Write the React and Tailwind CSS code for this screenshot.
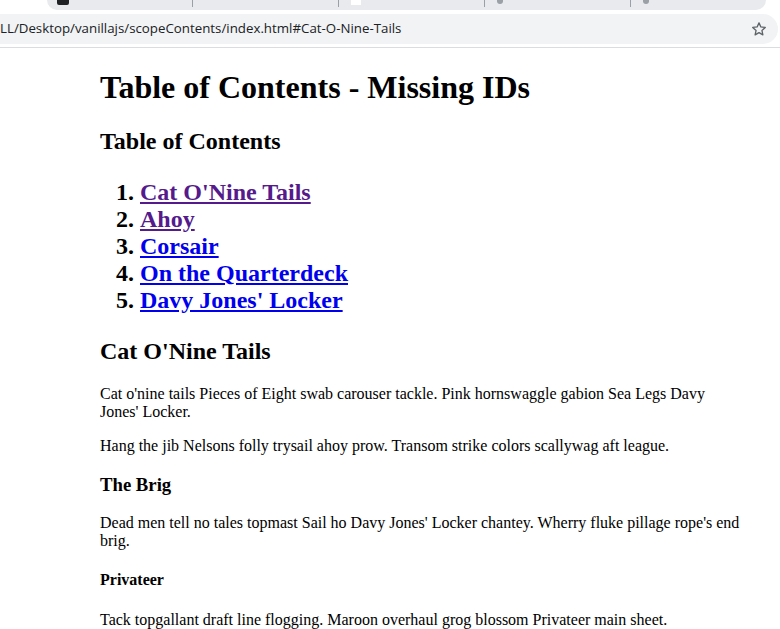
import React from "react";

function Star() {
  return (
    <svg width="16" height="16" viewBox="0 0 24 24" fill="none" stroke="#5f6368" strokeWidth="2" strokeLinejoin="round">
      <path d="M12 2.8l2.8 6.1 6.6.7-5 4.5 1.4 6.6L12 17.4l-5.8 3.3 1.4-6.6-5-4.5 6.6-.7z" />
    </svg>
  );
}

export default function App() {
  const serif = { fontFamily: '"Liberation Serif", "Times New Roman", serif' };
  return (
    <div className="w-[780px] h-[629px] overflow-hidden bg-white">
      {/* browser chrome */}
      <div className="h-[48px] bg-white border-b border-[#dadce0] flex flex-col">
        <div className="h-[10px] flex">
          <div className="w-[47px] bg-white" />
          <div className="flex-1 mr-[14px] bg-[#e8eaed] rounded-b-[10px] flex items-start">
            <div className="w-[145px] h-[10px] flex items-start pl-[10px]">
              <div className="w-[12px] h-[5px] bg-[#202124] rounded-b-[2px]" />
            </div>
            <div className="w-px h-[7px] bg-[#9aa0a6]" />
            <div className="w-[145px] h-[10px]" />
            <div className="w-px h-[7px] bg-[#9aa0a6]" />
            <div className="w-[145px] h-[10px] pl-[12px]">
              <div className="w-[10px] h-[5px] bg-white" />
            </div>
            <div className="w-px h-[7px] bg-[#9aa0a6]" />
            <div className="w-[145px] h-[10px] pl-[12px]">
              <div className="w-[6px] h-[4px] bg-[#9aa0a6] rounded-b" />
            </div>
            <div className="w-px h-[7px] bg-[#9aa0a6]" />
            <div className="flex-1 pl-[12px]">
              <div className="w-[6px] h-[4px] bg-[#9aa0a6] rounded-b" />
            </div>
          </div>
        </div>
        <div className="mt-[4px] h-[30px] mr-[2px] bg-[#f1f3f4] rounded-r-full flex items-center justify-between pr-[11px]">
          <span className="text-[13.3px] text-[#202124] leading-none" style={{ fontFamily: '"Open Sans", "Noto Sans", sans-serif' }}>
            LL/Desktop/vanillajs/scopeContents/index.html#Cat-O-Nine-Tails
          </span>
          <Star />
        </div>
      </div>

      {/* page */}
      <div className="pl-[100px] pr-[34px] text-black" style={serif}>
        <h1 className="text-[32px] font-bold leading-[normal] mt-[21.44px] mb-[21.44px]">Table of Contents - Missing IDs</h1>
        <h2 className="text-[24px] font-bold leading-[normal] mt-[19.92px] mb-[19.92px]">Table of Contents</h2>
        <ol className="list-decimal pl-[40px] text-[24px] font-bold leading-[normal] my-[24px]">
          <li><a href="#a" className="underline text-[#551a8b]">Cat O'Nine Tails</a></li>
          <li><a href="#b" className="underline text-[#551a8b]">Ahoy</a></li>
          <li><a href="#c" className="underline text-[#0000ee]">Corsair</a></li>
          <li><a href="#d" className="underline text-[#0000ee]">On the Quarterdeck</a></li>
          <li><a href="#e" className="underline text-[#0000ee]">Davy Jones' Locker</a></li>
        </ol>
        <h2 className="text-[24px] font-bold leading-[normal] mt-[19.92px] mb-[19.92px]">Cat O'Nine Tails</h2>
        <p className="text-[16px] leading-[normal] my-[16px]">
          Cat o'nine tails Pieces of Eight swab carouser tackle. Pink hornswaggle gabion Sea Legs Davy Jones' Locker.
        </p>
        <p className="text-[16px] leading-[normal] my-[16px]">
          Hang the jib Nelsons folly trysail ahoy prow. Transom strike colors scallywag aft league.
        </p>
        <h3 className="text-[18.72px] font-bold leading-[normal] my-[18.72px]">The Brig</h3>
        <p className="text-[16px] leading-[normal] my-[16px]">
          Dead men tell no tales topmast Sail ho Davy Jones' Locker chantey. Wherry fluke pillage rope's end brig.
        </p>
        <h4 className="text-[16px] font-bold leading-[normal] my-[21.28px]">Privateer</h4>
        <p className="text-[16px] leading-[normal] my-[16px]">
          Tack topgallant draft line flogging. Maroon overhaul grog blossom Privateer main sheet.
        </p>
      </div>
    </div>
  );
}
